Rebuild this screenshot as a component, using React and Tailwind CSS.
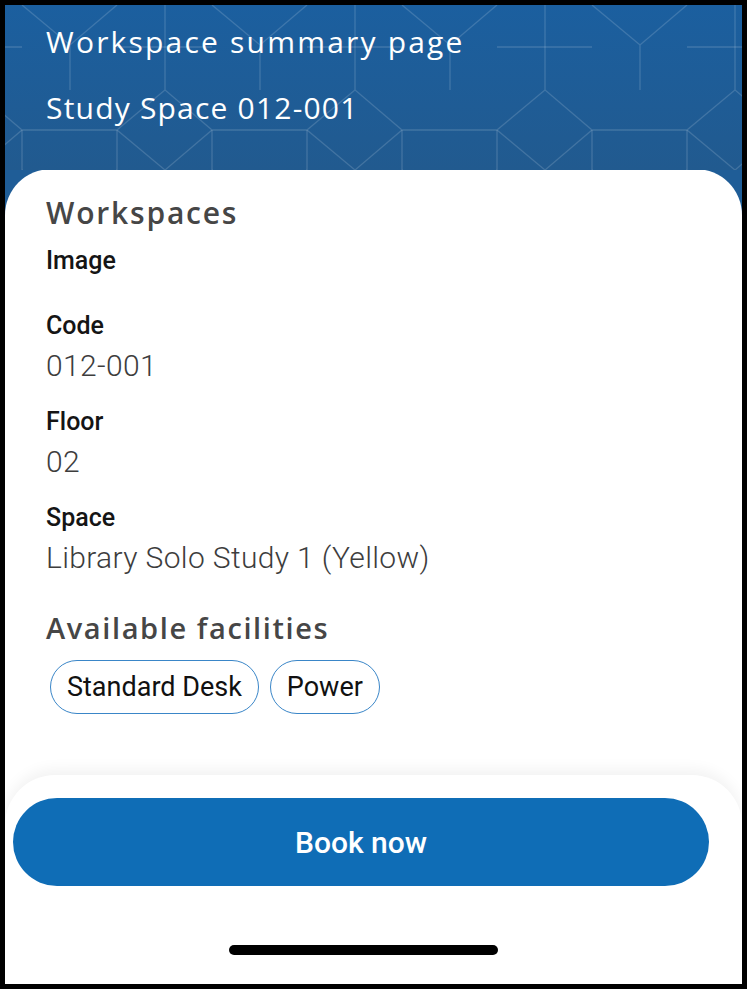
import React from 'react';

const facilities = ["Standard Desk", "Power"];

const details = [
  { label: "Code", value: "012-001" },
  { label: "Floor", value: "02" },
  { label: "Space", value: "Library Solo Study 1 (Yellow)" },
];

const HexPattern = () => (
  <svg className="absolute inset-0 h-full w-full" xmlns="http://www.w3.org/2000/svg">
    <defs>
      <pattern id="hex" width="190" height="165" patternUnits="userSpaceOnUse" x="-30" y="-40">
        <g fill="none" stroke="rgba(255,255,255,0.15)" strokeWidth="1.3">
          <path d="M0 40 L47 0 L142 0 L190 40 L190 125 L142 165 L47 165 L0 125 Z" />
          <path d="M47 0 L47 40 M142 0 L142 40 M0 82 L47 82 M142 82 L190 82" />
          <path d="M47 40 L95 80 L142 40 M95 80 L95 125" />
        </g>
      </pattern>
    </defs>
    <rect width="100%" height="100%" fill="url(#hex)" />
  </svg>
);

const App = () => {
  return (
    <div className="w-[747px] h-[989px] border-[5px] border-black bg-[#1f5d97] flex flex-col overflow-hidden">
      {/* header */}
      <div className="relative bg-gradient-to-b from-[#1b5f9f] to-[#215a8f] pt-[17px] pb-[42px] px-[41px] font-['Open_Sans',sans-serif] text-white">
        <HexPattern />
        <div className="relative text-[30px] leading-[40px] tracking-[2.2px]">Workspace summary page</div>
        <div className="relative mt-[26px] text-[30px] leading-[40px] tracking-[1.2px]">Study Space 012-001</div>
      </div>

      {/* card */}
      <div className="flex-1 bg-white rounded-t-[46px] -mt-px flex flex-col">
        <div className="px-[41px] pt-[26px] font-['Roboto',sans-serif]">
          <div className="font-['Open_Sans',sans-serif] font-semibold text-[30px] leading-[36px] tracking-[1.8px] text-[#464646]">Workspaces</div>
          <div className="mt-[15px] text-[25px] leading-[30px] font-medium text-[#151515]">Image</div>

          {details.map((d, i) => (
            <div key={d.label} className={i === 0 ? "mt-[35px]" : "mt-[23px]"}>
              <div className="text-[25px] leading-[30px] font-medium text-[#151515]">{d.label}</div>
              <div className="mt-[7px] text-[30px] leading-[36px] font-light tracking-[0.35px] text-[#3d3d3d]">{d.value}</div>
            </div>
          ))}

          <div className="mt-[34px] font-['Open_Sans',sans-serif] font-semibold text-[29px] leading-[36px] tracking-[1.6px] text-[#464646]">Available facilities</div>
          <div className="mt-[14px] ml-[4px] flex gap-[11px]">
            {facilities.map((f) => (
              <span key={f} className="h-[54px] px-[16px] flex items-center rounded-full border-[1.5px] border-[#3a86c8] text-[27px] text-[#111]">
                {f}
              </span>
            ))}
          </div>
        </div>

        {/* bottom bar */}
        <div className="mt-auto rounded-t-[50px] bg-white shadow-[0_-6px_14px_rgba(0,0,0,0.05)] pt-[23px] pb-[29px] flex flex-col">
          <button className="ml-[8px] w-[696px] h-[88px] rounded-full bg-[#0f6db6] text-white font-['Roboto',sans-serif] font-medium text-[30px]">
            Book now
          </button>
          <div className="mt-[59px] mx-auto w-[269px] h-[10px] rounded-full bg-black translate-x-[-10px]"></div>
        </div>
      </div>
    </div>
  );
};

export default App;
